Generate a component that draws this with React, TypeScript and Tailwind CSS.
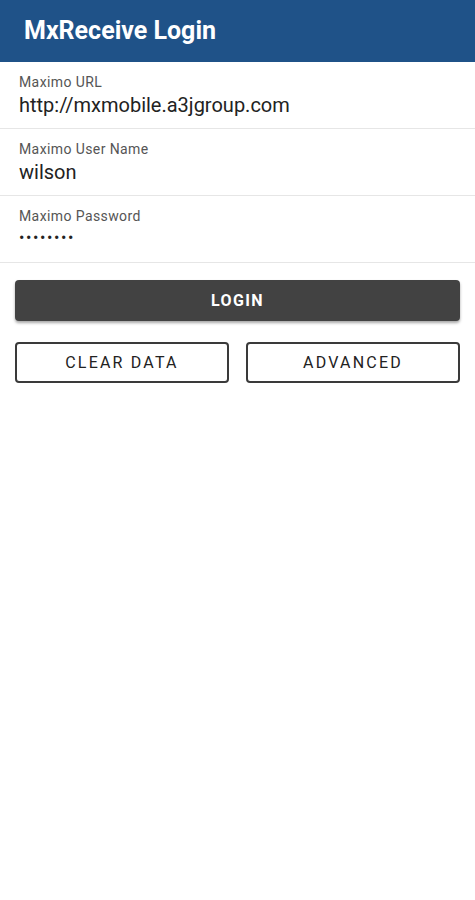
export default function App() {
  const fields = [
    { label: "Maximo URL", value: "http://mxmobile.a3jgroup.com" },
    { label: "Maximo User Name", value: "wilson" },
    { label: "Maximo Password", value: "••••••••", password: true },
  ];

  return (
    <div className="min-h-[900px] w-[475px] bg-white font-['Roboto',sans-serif]">
      {/* Header */}
      <div className="h-[62px] bg-[#1f5288] flex items-center px-6 pb-[2px]">
        <h1 className="text-[25px] font-bold text-white leading-none">MxReceive Login</h1>
      </div>

      {/* Fields */}
      {fields.map((f) => (
        <div key={f.label} className="h-[67px] border-b border-[#e6e6e6] px-[19px] pt-[11px]">
          <p className="text-[14px] text-[#555] leading-[18px] tracking-[0.4px]">{f.label}</p>
          {f.password ? (
            <p className="text-[16px] text-[#222] leading-[24px] tracking-[1.6px] mt-[1px]">{f.value}</p>
          ) : (
            <p className="text-[20px] text-[#222] leading-[24px] mt-[2px]">{f.value}</p>
          )}
        </div>
      ))}

      {/* Buttons */}
      <div className="px-[15px] pt-[17px]">
        <button
          type="button"
          className="w-full h-[41px] rounded bg-[#424242] text-white text-[16px] font-bold tracking-[1.4px] shadow-[0_2px_3px_rgba(0,0,0,0.35)]"
        >
          LOGIN
        </button>
        <div className="grid grid-cols-2 gap-[17px] mt-[21px]">
          <button
            type="button"
            className="h-[41px] rounded border-2 border-[#3a3a3a] bg-white text-[#222] text-[16px] font-normal tracking-[2.2px]"
          >
            CLEAR DATA
          </button>
          <button
            type="button"
            className="h-[41px] rounded border-2 border-[#3a3a3a] bg-white text-[#222] text-[16px] font-normal tracking-[2.2px]"
          >
            ADVANCED
          </button>
        </div>
      </div>
    </div>
  );
}
